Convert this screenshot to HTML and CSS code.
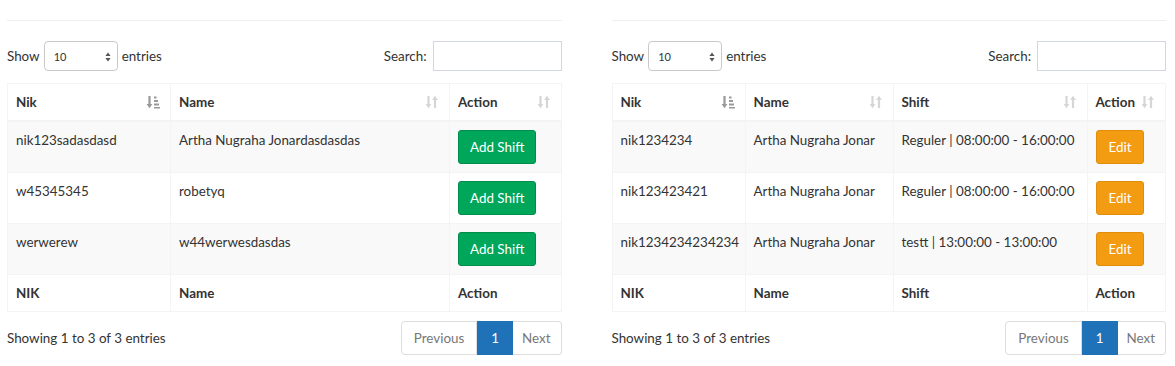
FILE: index.html
```html
<!DOCTYPE html>
<html>
<head>
<meta charset="utf-8">
<link rel="stylesheet" href="styles.css">
</head>
<body>
<div class="page">
  <section class="panel">
    <div class="controls">
      <label class="length"><span>Show</span><span class="select"><span>10</span><svg class="spin" width="6" height="10" viewBox="0 0 6 10"><path d="M3 0.5L5.6 4H0.4z M3 9.5L5.6 6H0.4z" fill="#555"/></svg></span><span>entries</span></label>
      <label class="search"><span>Search:</span><span class="input"></span></label>
    </div>
    <table class="dt left">
      <colgroup><col style="width:163px"><col style="width:279px"><col></colgroup>
      <thead>
        <tr>
          <th><div class="th">Nik<svg class="ico sorted" width="14" height="14" viewBox="0 0 14 14"><path d="M3.5 1v9" stroke="currentColor" stroke-width="2.2"/><path d="M0.6 9h5.8L3.5 13.2z" fill="currentColor"/><rect x="8" y="1.5" width="2.5" height="2" fill="currentColor"/><rect x="8" y="5" width="4" height="2" fill="currentColor"/><rect x="8" y="8.5" width="5" height="2" fill="currentColor"/><rect x="8" y="12" width="6" height="1.5" fill="currentColor"/></svg></div></th>
          <th><div class="th">Name<svg class="ico" width="14" height="14" viewBox="0 0 14 14"><path d="M3.5 1v9" stroke="currentColor" stroke-width="2.2"/><path d="M0.6 9h5.8L3.5 13.2z" fill="currentColor"/><path d="M10 13V4" stroke="currentColor" stroke-width="2.2"/><path d="M7.1 5h5.8L10 0.8z" fill="currentColor"/></svg></div></th>
          <th><div class="th">Action<svg class="ico" width="14" height="14" viewBox="0 0 14 14"><path d="M3.5 1v9" stroke="currentColor" stroke-width="2.2"/><path d="M0.6 9h5.8L3.5 13.2z" fill="currentColor"/><path d="M10 13V4" stroke="currentColor" stroke-width="2.2"/><path d="M7.1 5h5.8L10 0.8z" fill="currentColor"/></svg></div></th>
        </tr>
      </thead>
      <tbody>
        <tr><td>nik123sadasdasd</td><td>Artha Nugraha Jonardasdasdas</td><td><span class="btn green">Add Shift</span></td></tr>
        <tr><td>w45345345</td><td>robetyq</td><td><span class="btn green">Add Shift</span></td></tr>
        <tr><td>werwerew</td><td>w44werwesdasdas</td><td><span class="btn green">Add Shift</span></td></tr>
      </tbody>
      <tfoot>
        <tr><th>NIK</th><th>Name</th><th>Action</th></tr>
      </tfoot>
    </table>
    <div class="bottom">
      <div class="info">Showing 1 to 3 of 3 entries</div>
      <ul class="pager"><li class="prev">Previous</li><li class="active">1</li><li class="next">Next</li></ul>
    </div>
  </section>

  <section class="panel">
    <div class="controls">
      <label class="length"><span>Show</span><span class="select"><span>10</span><svg class="spin" width="6" height="10" viewBox="0 0 6 10"><path d="M3 0.5L5.6 4H0.4z M3 9.5L5.6 6H0.4z" fill="#555"/></svg></span><span>entries</span></label>
      <label class="search"><span>Search:</span><span class="input"></span></label>
    </div>
    <table class="dt right">
      <colgroup><col style="width:133px"><col style="width:148px"><col style="width:194px"><col></colgroup>
      <thead>
        <tr>
          <th><div class="th">Nik<svg class="ico sorted" width="14" height="14" viewBox="0 0 14 14"><path d="M3.5 1v9" stroke="currentColor" stroke-width="2.2"/><path d="M0.6 9h5.8L3.5 13.2z" fill="currentColor"/><rect x="8" y="1.5" width="2.5" height="2" fill="currentColor"/><rect x="8" y="5" width="4" height="2" fill="currentColor"/><rect x="8" y="8.5" width="5" height="2" fill="currentColor"/><rect x="8" y="12" width="6" height="1.5" fill="currentColor"/></svg></div></th>
          <th><div class="th">Name<svg class="ico" width="14" height="14" viewBox="0 0 14 14"><path d="M3.5 1v9" stroke="currentColor" stroke-width="2.2"/><path d="M0.6 9h5.8L3.5 13.2z" fill="currentColor"/><path d="M10 13V4" stroke="currentColor" stroke-width="2.2"/><path d="M7.1 5h5.8L10 0.8z" fill="currentColor"/></svg></div></th>
          <th><div class="th">Shift<svg class="ico" width="14" height="14" viewBox="0 0 14 14"><path d="M3.5 1v9" stroke="currentColor" stroke-width="2.2"/><path d="M0.6 9h5.8L3.5 13.2z" fill="currentColor"/><path d="M10 13V4" stroke="currentColor" stroke-width="2.2"/><path d="M7.1 5h5.8L10 0.8z" fill="currentColor"/></svg></div></th>
          <th><div class="th">Action<svg class="ico" width="14" height="14" viewBox="0 0 14 14"><path d="M3.5 1v9" stroke="currentColor" stroke-width="2.2"/><path d="M0.6 9h5.8L3.5 13.2z" fill="currentColor"/><path d="M10 13V4" stroke="currentColor" stroke-width="2.2"/><path d="M7.1 5h5.8L10 0.8z" fill="currentColor"/></svg></div></th>
        </tr>
      </thead>
      <tbody>
        <tr><td>nik1234234</td><td>Artha Nugraha Jonar</td><td>Reguler | 08:00:00 - 16:00:00</td><td><span class="btn orange">Edit</span></td></tr>
        <tr><td>nik123423421</td><td>Artha Nugraha Jonar</td><td>Reguler | 08:00:00 - 16:00:00</td><td><span class="btn orange">Edit</span></td></tr>
        <tr><td>nik1234234234234</td><td>Artha Nugraha Jonar</td><td>testt | 13:00:00 - 13:00:00</td><td><span class="btn orange">Edit</span></td></tr>
      </tbody>
      <tfoot>
        <tr><th>NIK</th><th>Name</th><th>Shift</th><th>Action</th></tr>
      </tfoot>
    </table>
    <div class="bottom">
      <div class="info">Showing 1 to 3 of 3 entries</div>
      <ul class="pager"><li class="prev">Previous</li><li class="active">1</li><li class="next">Next</li></ul>
    </div>
  </section>
</div>
</body>
</html>
```

FILE: styles.css
```css
* { box-sizing: border-box; }
html, body { margin: 0; background: #fff; }
body {
  font-family: "Lato", "Source Sans Pro", "Liberation Sans", sans-serif;
  font-size: 13.4px;
  line-height: 20px;
  color: #333;
}
.page {
  display: grid;
  grid-template-columns: 1fr 1fr;
  column-gap: 50px;
  padding: 20px 9px 0 7px;
}
.panel {
  border-top: 1px solid #eceff1;
  padding-top: 20px;
}
.controls {
  display: flex;
  justify-content: space-between;
  align-items: center;
  height: 30px;
  margin-bottom: 12px;
}
.length, .search {
  display: flex;
  align-items: center;
  gap: 4px;
  white-space: nowrap;
}
.select {
  display: flex;
  align-items: center;
  justify-content: space-between;
  width: 74px;
  height: 30px;
  border: 1px solid #c9c9c9;
  border-radius: 4px;
  padding: 2px 6px 0 9px;
  font-size: 11px;
}
.search { gap: 6px; }
.input {
  display: block;
  width: 129px;
  height: 30px;
  border: 1px solid #d2d6de;
}
.dt {
  width: 100%;
  border-collapse: collapse;
  table-layout: fixed;
  border: 1px solid #f4f4f4;
}
.dt th, .dt td {
  border: 1px solid #f4f4f4;
  padding: 8px;
  text-align: left;
  vertical-align: top;
  white-space: nowrap;
}
.dt thead th {
  border-bottom: 2px solid #f4f4f4;
  font-weight: 700;
  padding: 8px 10px 8px 8px;
}
.dt tfoot th { font-weight: 700; padding: 8px; }
.dt tbody tr:nth-child(odd) { background: #f9f9f9; }
.dt tbody td { height: 51px; }
.th {
  display: flex;
  justify-content: space-between;
  align-items: center;
}
.ico { color: #d6d6d6; flex: none; }
.ico.sorted { color: #999; }
.btn {
  display: inline-block;
  height: 34px;
  padding: 6px 11px;
  border-radius: 3px;
  color: #fff;
  line-height: 20px;
}
.green { background: #00a65a; border: 1px solid #008d4c; }
.orange { background: #f39c12; border: 1px solid #e08e0b; padding: 6px 12px; }
.bottom {
  display: flex;
  justify-content: space-between;
  align-items: center;
  margin-top: 9px;
}
.pager {
  display: flex;
  list-style: none;
  margin: 0;
  padding: 0;
}
.pager li {
  height: 34px;
  padding: 6px 12px;
  border: 1px solid #ddd;
  color: #777;
  line-height: 20px;
}
.pager .prev { border-radius: 4px 0 0 4px; padding: 6px 12px 6px 12px; }
.pager .active { background: #2072b8; border-color: #2072b8; color: #fff; padding: 6px 13px; }
.pager .next { border-radius: 0 4px 4px 0; border-left: 0; padding: 6px 10px 6px 9px; }
```
